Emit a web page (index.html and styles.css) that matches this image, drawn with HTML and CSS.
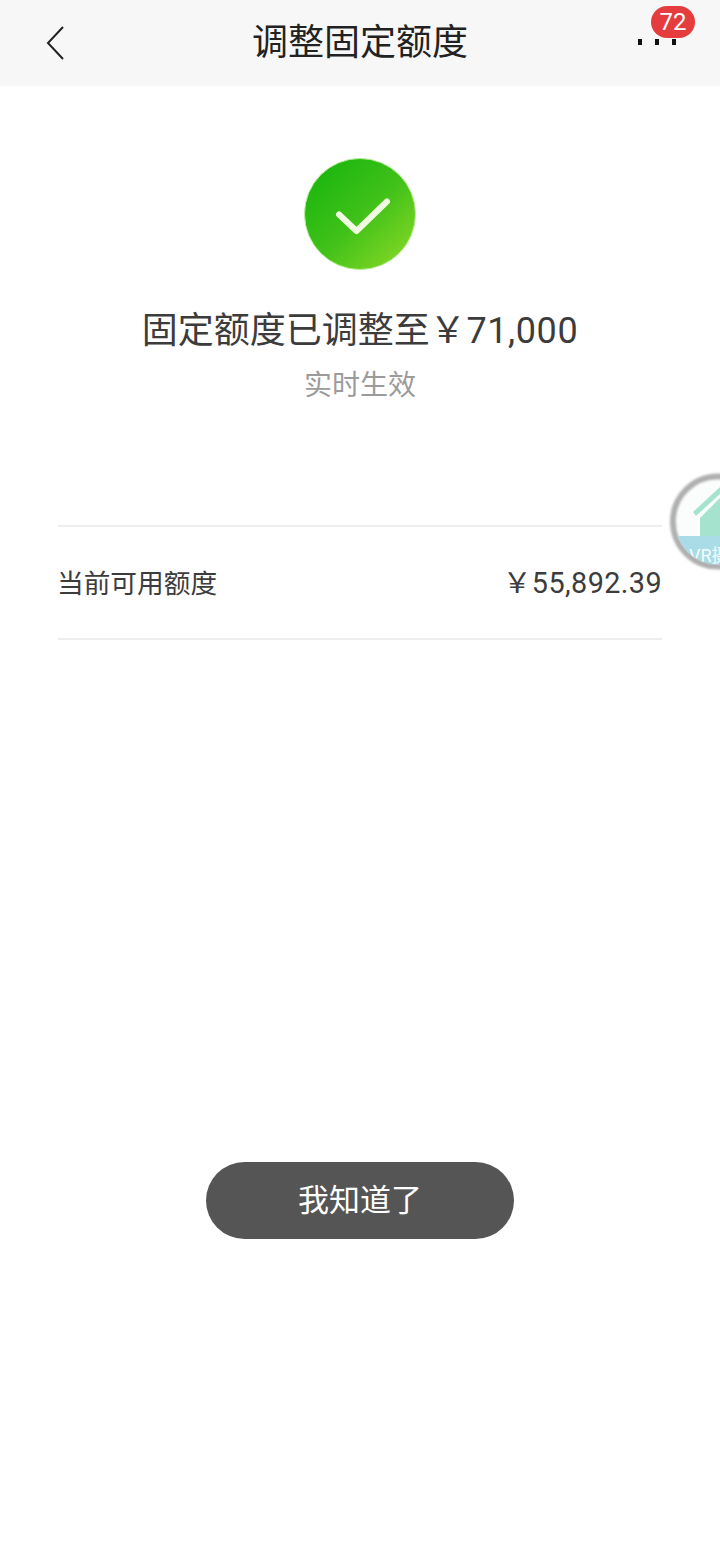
FILE: index.html
```html
<!DOCTYPE html>
<html lang="zh-CN">
<head>
<meta charset="utf-8">
<title>调整固定额度</title>
<link rel="stylesheet" href="styles.css">
</head>
<body>
<div class="page">
  <header class="bar">
    <svg class="back" width="22" height="38" viewBox="0 0 22 38"><path d="M19 3 L4 19 L19 35" fill="none" stroke="#222" stroke-width="2"/></svg>
    <h1 class="bar-title">调整固定额度</h1>
    <div class="more">
      <span class="dot"></span><span class="dot"></span><span class="dot"></span>
      <span class="badge">72</span>
    </div>
  </header>
  <main class="content">
    <svg class="check" width="112" height="112" viewBox="0 0 112 112">
      <defs><linearGradient id="g" x1="0.1" y1="0.15" x2="0.85" y2="0.95"><stop offset="0" stop-color="#1db70f"/><stop offset="0.5" stop-color="#40c119"/><stop offset="1" stop-color="#80d624"/></linearGradient></defs>
      <circle cx="56" cy="56" r="55.500" fill="url(#g)" stroke="#b9ee9a" stroke-width="1"/>
      <path d="M35 56.500 L52.500 73 L83 43.500" fill="none" stroke="#eefbe0" stroke-width="6" stroke-linecap="round" stroke-linejoin="round"/>
    </svg>
    <h2 class="headline">固定额度已调整至<span class="amount">￥71,000</span></h2>
    <p class="sub">实时生效</p>
    <div class="row">
      <span class="row-label">当前可用额度</span>
      <span class="row-value">￥55,892.39</span>
    </div>
    <button class="done">我知道了</button>
  </main>
  <svg class="float" width="52" height="102" viewBox="0 0 52 102">
    <defs>
      <clipPath id="c"><circle cx="50" cy="50.500" r="43"/></clipPath>
      <filter id="soft"><feGaussianBlur stdDeviation="1.2"/></filter>
    </defs>
    <circle cx="50" cy="50.500" r="45" fill="#fbfdfc" stroke="#b0b0b0" stroke-width="6" filter="url(#soft)"/>
    <g clip-path="url(#c)">
      <path d="M32 66 V47 L52 27 V66 Z" fill="#a5e3cf"/>
      <path d="M25 41 L52 16 V23 L28 45 Z" fill="#a5e3cf"/>
      <rect x="0" y="65" width="52" height="40" fill="#a9dce6"/>
      <text x="21" y="91" class="float-text">VR摄</text>
    </g>
  </svg>
</div>
</body>
</html>
```
FILE: styles.css
```css
* { box-sizing: border-box; }
html, body { margin: 0; padding: 0; background: #fff; }
body { font-family: "Noto Sans CJK SC", Roboto, sans-serif; }
.page { position: relative; width: 720px; height: 1546px; overflow: hidden; background: #fff; }
.bar { height: 86px; background: #f7f7f7; display: flex; align-items: center; justify-content: space-between; padding: 0 44px; position: relative; }
.back { display: block; margin-top: -1px; }
.bar-title { position: absolute; left: 0; right: 0; top: 13px; margin: 0; text-align: center; font-size: 36px; line-height: 52px; font-weight: 400; color: #222; }
.more { position: relative; display: flex; gap: 13px; margin-top: -2px; }
.dot { width: 4px; height: 6px; background: #111; display: block; }
.badge { position: absolute; right: -19px; top: -33px; width: 44px; height: 32px; border-radius: 16px; background: #e53d3d; color: #fff; font-family: Roboto, sans-serif; font-size: 24px; line-height: 32px; text-align: center; }
.content { display: flex; flex-direction: column; align-items: center; padding: 72px 58px 0; }
.check { display: block; }
.headline { margin: 33px 0 0; font-size: 36px; line-height: 48px; font-weight: 400; color: #3c3c3c; white-space: nowrap; }
.amount { font-family: Roboto, "Noto Sans CJK SC", sans-serif; letter-spacing: 0.6px; }
.sub { margin: 8px 0 0; font-size: 28px; line-height: 40px; color: #9b9b9b; }
.row { width: 100%; margin-top: 122px; height: 115px; border-top: 2px solid #eeeeee; border-bottom: 2px solid #eeeeee; display: flex; align-items: center; justify-content: space-between; color: #3c3c3c; }
.row-label { font-size: 26.700px; line-height: 40px; margin-top: -2px; margin-left: -1px; }
.row-value { font-family: Roboto, "Noto Sans CJK SC", sans-serif; font-size: 28.800px; line-height: 40px; letter-spacing: 0.4px; }
.done { display: block; margin-top: 522px; width: 308px; height: 77px; border: 0; border-radius: 39px; background: #555555; color: #fff; font-family: inherit; font-size: 31px; line-height: 40px; padding: 0 0 6px; }
.float { position: absolute; left: 668px; top: 471px; display: block; }
.float-text { font-family: Roboto, "Noto Sans CJK SC", sans-serif; font-size: 18px; fill: #f4fbfc; }
```
